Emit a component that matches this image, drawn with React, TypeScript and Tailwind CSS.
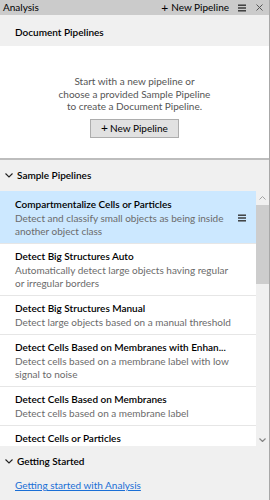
const rows = [
  {
    title: 'Compartmentalize Cells or Particles',
    desc: ['Detect and classify small objects as being inside', 'another object class'],
    selected: true,
  },
  {
    title: 'Detect Big Structures Auto',
    desc: ['Automatically detect large objects having regular', 'or irregular borders'],
  },
  {
    title: 'Detect Big Structures Manual',
    desc: ['Detect large objects based on a manual threshold'],
  },
  {
    title: 'Detect Cells Based on Membranes with Enhan...',
    desc: ['Detect cells based on a membrane label with low', 'signal to noise'],
  },
  {
    title: 'Detect Cells Based on Membranes',
    desc: ['Detect cells based on a membrane label'],
  },
  {
    title: 'Detect Cells or Particles',
    desc: [] as string[],
  },
];

const Chevron = () => (
  <svg width="8" height="5" viewBox="0 0 8 5" className="shrink-0">
    <path d="M0.5 0.5 L4 4 L7.5 0.5" fill="none" stroke="#222" strokeWidth="1.1" />
  </svg>
);

const Burger = () => (
  <svg width="8" height="8" viewBox="0 0 8 8">
    <rect x="0" y="0.5" width="8" height="1.4" fill="#333" />
    <rect x="0" y="3.3" width="8" height="1.4" fill="#333" />
    <rect x="0" y="6.1" width="8" height="1.4" fill="#333" />
  </svg>
);

const App = () => {
  return (
    <div
      className="w-[270px] h-[500px] overflow-hidden flex flex-col bg-[#f0f0f0] border-r border-[#a8a8a8] text-[10px] text-black"
      style={{ fontFamily: 'Lato, "Liberation Sans", sans-serif' }}
    >
      {/* title bar */}
      <div className="h-[15px] shrink-0 flex items-center bg-[#cbcbcb] pl-[3px] pr-[6px]">
        <span className="leading-[15px]">Analysis</span>
        <div className="ml-auto flex items-center">
          <span className="text-[12px] leading-[15px] mr-[3px]">+</span>
          <span className="leading-[15px]">New Pipeline</span>
          <span className="ml-[9px] flex">
            <Burger />
          </span>
          <svg width="7" height="7" viewBox="0 0 7 7" className="ml-[10px]">
            <path d="M0.5 0.5 L6.5 6.5 M6.5 0.5 L0.5 6.5" stroke="#555" strokeWidth="1" />
          </svg>
        </div>
      </div>

      {/* document pipelines */}
      <div className="h-[31px] shrink-0 flex items-center pl-[15px] pt-[3px] font-semibold">
        Document Pipelines
      </div>
      <div className="h-[114px] shrink-0 bg-white flex flex-col items-center pt-[29px] border-b-2 border-[#bdbdbd]">
        <p className="text-center text-[#555] leading-[12.5px]">
          Start with a new pipeline or
          <br />
          choose a provided Sample Pipeline
          <br />
          to create a Document Pipeline.
        </p>
        <button className="mt-[6px] w-[89px] h-[19px] bg-[#e1e1e1] border border-[#adadad] flex items-center justify-center text-black">
          <span className="text-[12px] leading-none mr-[2px]">+</span>
          <span>New Pipeline</span>
        </button>
      </div>

      {/* sample pipelines */}
      <div className="h-[31px] shrink-0 flex items-center pl-[5px] gap-[4px] font-semibold">
        <Chevron />
        <span>Sample Pipelines</span>
      </div>
      <div className="h-[255px] shrink-0 flex">
        <div className="flex-1 bg-white overflow-hidden">
          {rows.map((r, i) => (
            <div
              key={r.title}
              className={
                'relative pl-[15px] pt-[5px] pb-[5px] ' +
                (i === 0 ? 'border-t border-transparent ' : 'border-t border-[#e6e6e6] ') +
                (r.selected ? 'bg-[#cce8ff]' : '')
              }
            >
              <div className="font-semibold leading-[15px] whitespace-nowrap">{r.title}</div>
              {r.desc.map((d) => (
                <div key={d} className="leading-[13px] text-[#6b6b6b] whitespace-nowrap">
                  {d}
                </div>
              ))}
              {r.selected && (
                <span className="absolute right-[10px] top-[22px] flex">
                  <Burger />
                </span>
              )}
            </div>
          ))}
        </div>
        <div className="w-[13px] bg-[#f0f0f0] flex flex-col">
          <div className="h-[13px] flex items-center justify-center">
            <svg width="7" height="4" viewBox="0 0 7 4">
              <path d="M0.5 3.5 L3.5 0.5 L6.5 3.5" fill="none" stroke="#a3a3a3" strokeWidth="1" />
            </svg>
          </div>
          <div className="mt-[1px] h-[79px] bg-[#cdcdcd]" />
          <div className="flex-1" />
          <div className="h-[13px] flex items-center justify-center">
            <svg width="7" height="4" viewBox="0 0 7 4">
              <path d="M0.5 0.5 L3.5 3.5 L6.5 0.5" fill="none" stroke="#858585" strokeWidth="1.2" />
            </svg>
          </div>
        </div>
      </div>

      {/* getting started */}
      <div className="h-[30px] shrink-0 flex items-center pl-[5px] gap-[4px] pt-[1px] font-semibold">
        <Chevron />
        <span>Getting Started</span>
      </div>
      <div className="pl-[15px] pt-[2px]">
        <a href="#" className="text-[#1a6fd6] underline leading-[13px]">
          Getting started with Analysis
        </a>
      </div>
    </div>
  );
};

export default App;
